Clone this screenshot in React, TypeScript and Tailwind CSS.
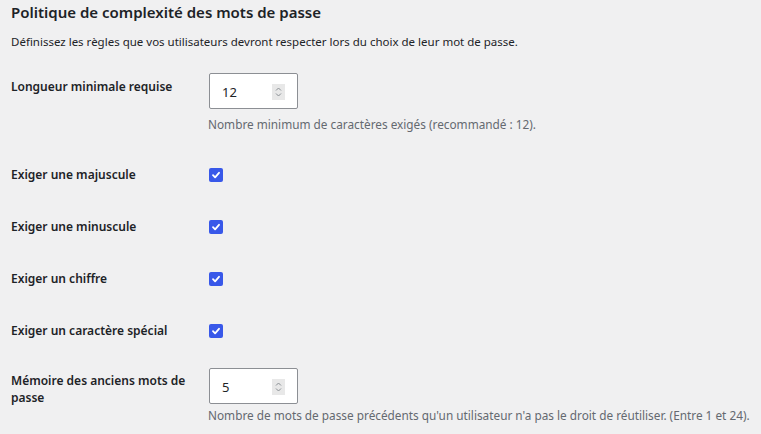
import React from "react";

const font = { fontFamily: '"Noto Sans", "Open Sans", sans-serif' };

function Spinner() {
  return (
    <span className="absolute right-[12px] top-[10px] flex h-[16px] w-[13px] flex-col items-center justify-center bg-[#e8e8e8]">
      <svg width="7" height="12" viewBox="0 0 7 12" fill="none" stroke="#8a8f94" strokeWidth="1">
        <path d="M1 4.5 L3.5 2 L6 4.5" />
        <path d="M1 7.5 L3.5 10 L6 7.5" />
      </svg>
    </span>
  );
}

function NumberBox({ value }: { value: string }) {
  return (
    <div className="relative h-[36px] w-[89px] shrink-0 rounded-[2px] border border-[#8c8f94] bg-white">
      <span className="absolute left-[12px] top-[8px] text-[13px] leading-[20px] text-[#1d2327]">{value}</span>
      <Spinner />
    </div>
  );
}

function Check() {
  return (
    <span className="flex h-[14px] w-[14px] items-center justify-center rounded-[2px] bg-[#3858e9]">
      <svg width="10" height="10" viewBox="0 0 10 10" fill="none" stroke="white" strokeWidth="1.8" strokeLinecap="round" strokeLinejoin="round">
        <path d="M2 5.2 L4.1 7.3 L8 2.8" />
      </svg>
    </span>
  );
}

function CheckRow({ label, mt }: { label: string; mt: string }) {
  return (
    <div className={`flex items-center ${mt}`}>
      <div className="w-[198px] shrink-0 text-[12px] font-semibold leading-[20px] text-[#1d2327]">{label}</div>
      <Check />
    </div>
  );
}

export default function App() {
  return (
    <div className="min-h-screen bg-[#f0f0f1] pl-[11px] pt-[1px] text-[#1d2327]" style={font}>
      <h2 className="mt-[0px] text-[15px] font-semibold leading-[22px]">Politique de complexité des mots de passe</h2>
      <p className="mt-[10px] text-[11.5px] leading-[18px] text-[#1d2327]">
        Définissez les règles que vos utilisateurs devront respecter lors du choix de leur mot de passe.
      </p>

      <div className="mt-[22px] flex">
        <div className="w-[198px] shrink-0 pt-[4px] text-[12px] font-semibold leading-[20px]">Longueur minimale requise</div>
        <div className="flex flex-col">
          <NumberBox value="12" />
          <div className="mt-[5px] -ml-[1px] whitespace-nowrap text-[11.8px] leading-[20px] text-[#646970]">
            Nombre minimum de caractères exigés (recommandé : 12).
          </div>
        </div>
      </div>

      <CheckRow label="Exiger une majuscule" mt="mt-[31px]" />
      <CheckRow label="Exiger une minuscule" mt="mt-[32px]" />
      <CheckRow label="Exiger un chiffre" mt="mt-[32px]" />
      <CheckRow label="Exiger un caractère spécial" mt="mt-[32px]" />

      <div className="mt-[27px] flex">
        <div className="w-[198px] shrink-0 whitespace-nowrap pt-[4px] text-[12px] font-semibold leading-[17px]">
          Mémoire des anciens mots de
          <br />
          passe
        </div>
        <div className="flex flex-col">
          <NumberBox value="5" />
          <div className="mt-[1px] -ml-[1px] whitespace-nowrap text-[11.8px] leading-[20px] text-[#646970]">
            Nombre de mots de passe précédents qu'un utilisateur n'a pas le droit de réutiliser. (Entre 1 et 24).
          </div>
        </div>
      </div>
    </div>
  );
}
